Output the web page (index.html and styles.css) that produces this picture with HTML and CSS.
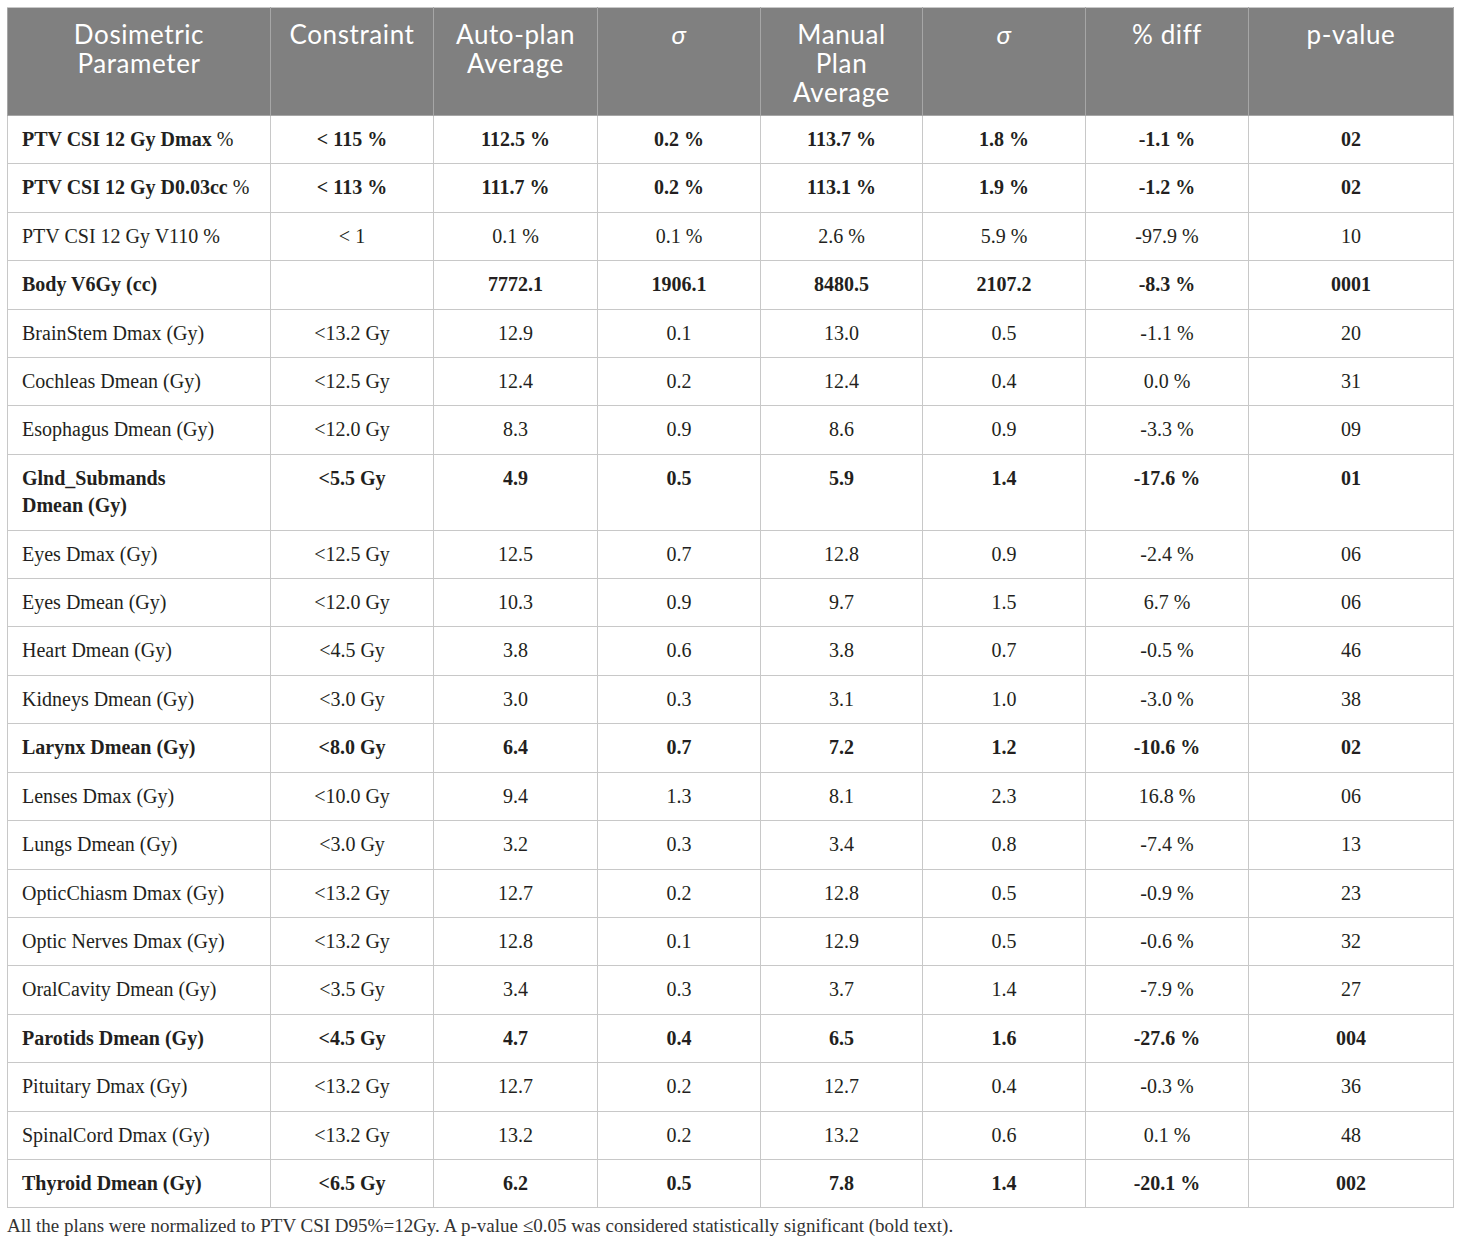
FILE: index.html
```html
<!DOCTYPE html>
<html lang="en">
<head>
  <meta charset="UTF-8">
  <title>Dosimetric comparison</title>
  <link rel="stylesheet" href="styles.css">
</head>
<body>
  <div class="wrap">
    <table class="dose">
      <colgroup>
        <col style="width: 263px">
        <col style="width: 163px">
        <col style="width: 164px">
        <col style="width: 163px">
        <col style="width: 162px">
        <col style="width: 163px">
        <col style="width: 163px">
        <col style="width: 205px">
      </colgroup>
      <thead>
        <tr>
          <th>Dosimetric<br>Parameter</th>
          <th>Constraint</th>
          <th>Auto-plan<br>Average</th>
          <th class="sig">σ</th>
          <th>Manual<br>Plan<br>Average</th>
          <th class="sig">σ</th>
          <th>% diff</th>
          <th>p-value</th>
        </tr>
      </thead>
      <tbody>
        <tr class="bold"><td>PTV CSI 12 Gy Dmax <span class="reg">%</span></td><td>&lt; 115 %</td><td>112.5 %</td><td>0.2 %</td><td>113.7 %</td><td>1.8 %</td><td>-1.1 %</td><td>02</td></tr>
        <tr class="bold"><td>PTV CSI 12 Gy D0.03cc <span class="reg">%</span></td><td>&lt; 113 %</td><td>111.7 %</td><td>0.2 %</td><td>113.1 %</td><td>1.9 %</td><td>-1.2 %</td><td>02</td></tr>
        <tr><td>PTV CSI 12 Gy V110 %</td><td>&lt; 1</td><td>0.1 %</td><td>0.1 %</td><td>2.6 %</td><td>5.9 %</td><td>-97.9 %</td><td>10</td></tr>
        <tr class="bold"><td>Body V6Gy (cc)</td><td></td><td>7772.1</td><td>1906.1</td><td>8480.5</td><td>2107.2</td><td>-8.3 %</td><td>0001</td></tr>
        <tr><td>BrainStem Dmax (Gy)</td><td>&lt;13.2 Gy</td><td>12.9</td><td>0.1</td><td>13.0</td><td>0.5</td><td>-1.1 %</td><td>20</td></tr>
        <tr><td>Cochleas Dmean (Gy)</td><td>&lt;12.5 Gy</td><td>12.4</td><td>0.2</td><td>12.4</td><td>0.4</td><td>0.0 %</td><td>31</td></tr>
        <tr><td>Esophagus Dmean (Gy)</td><td>&lt;12.0 Gy</td><td>8.3</td><td>0.9</td><td>8.6</td><td>0.9</td><td>-3.3 %</td><td>09</td></tr>
        <tr class="bold"><td>Glnd_Submands<br>Dmean (Gy)</td><td>&lt;5.5 Gy</td><td>4.9</td><td>0.5</td><td>5.9</td><td>1.4</td><td>-17.6 %</td><td>01</td></tr>
        <tr><td>Eyes Dmax (Gy)</td><td>&lt;12.5 Gy</td><td>12.5</td><td>0.7</td><td>12.8</td><td>0.9</td><td>-2.4 %</td><td>06</td></tr>
        <tr><td>Eyes Dmean (Gy)</td><td>&lt;12.0 Gy</td><td>10.3</td><td>0.9</td><td>9.7</td><td>1.5</td><td>6.7 %</td><td>06</td></tr>
        <tr><td>Heart Dmean (Gy)</td><td>&lt;4.5 Gy</td><td>3.8</td><td>0.6</td><td>3.8</td><td>0.7</td><td>-0.5 %</td><td>46</td></tr>
        <tr><td>Kidneys Dmean (Gy)</td><td>&lt;3.0 Gy</td><td>3.0</td><td>0.3</td><td>3.1</td><td>1.0</td><td>-3.0 %</td><td>38</td></tr>
        <tr class="bold"><td>Larynx Dmean (Gy)</td><td>&lt;8.0 Gy</td><td>6.4</td><td>0.7</td><td>7.2</td><td>1.2</td><td>-10.6 %</td><td>02</td></tr>
        <tr><td>Lenses Dmax (Gy)</td><td>&lt;10.0 Gy</td><td>9.4</td><td>1.3</td><td>8.1</td><td>2.3</td><td>16.8 %</td><td>06</td></tr>
        <tr><td>Lungs Dmean (Gy)</td><td>&lt;3.0 Gy</td><td>3.2</td><td>0.3</td><td>3.4</td><td>0.8</td><td>-7.4 %</td><td>13</td></tr>
        <tr><td>OpticChiasm Dmax (Gy)</td><td>&lt;13.2 Gy</td><td>12.7</td><td>0.2</td><td>12.8</td><td>0.5</td><td>-0.9 %</td><td>23</td></tr>
        <tr><td>Optic Nerves Dmax (Gy)</td><td>&lt;13.2 Gy</td><td>12.8</td><td>0.1</td><td>12.9</td><td>0.5</td><td>-0.6 %</td><td>32</td></tr>
        <tr><td>OralCavity Dmean (Gy)</td><td>&lt;3.5 Gy</td><td>3.4</td><td>0.3</td><td>3.7</td><td>1.4</td><td>-7.9 %</td><td>27</td></tr>
        <tr class="bold"><td>Parotids Dmean (Gy)</td><td>&lt;4.5 Gy</td><td>4.7</td><td>0.4</td><td>6.5</td><td>1.6</td><td>-27.6 %</td><td>004</td></tr>
        <tr><td>Pituitary Dmax (Gy)</td><td>&lt;13.2 Gy</td><td>12.7</td><td>0.2</td><td>12.7</td><td>0.4</td><td>-0.3 %</td><td>36</td></tr>
        <tr><td>SpinalCord Dmax (Gy)</td><td>&lt;13.2 Gy</td><td>13.2</td><td>0.2</td><td>13.2</td><td>0.6</td><td>0.1 %</td><td>48</td></tr>
        <tr class="bold"><td>Thyroid Dmean (Gy)</td><td>&lt;6.5 Gy</td><td>6.2</td><td>0.5</td><td>7.8</td><td>1.4</td><td>-20.1 %</td><td>002</td></tr>
      </tbody>
    </table>
    <p class="note">All the plans were normalized to PTV CSI D95%=12Gy. A p-value ≤0.05 was considered statistically significant (bold text).</p>
  </div>
</body>
</html>
```

FILE: styles.css
```css
* {
  margin: 0;
  padding: 0;
  box-sizing: border-box;
}

body {
  background: #fff;
  font-family: "Liberation Serif", "Times New Roman", serif;
  color: #231f20;
}

.wrap {
  padding: 7px 7px 0 7px;
}

.dose {
  width: 1446px;
  table-layout: fixed;
  border-collapse: collapse;
}

.dose th {
  background-color: #808080;
  color: #fff;
  font-family: Lato, "Open Sans", sans-serif;
  font-weight: 400;
  font-size: 26px;
  letter-spacing: 0.6px;
  line-height: 29px;
  text-align: center;
  vertical-align: top;
  padding: 12px 8px 8px;
  border: 1px solid #a6a6a6;
  border-top-color: #c8c8c8;
}

.dose th.sig {
  font-style: italic;
}

.dose td {
  font-size: 20px;
  line-height: 27.4px;
  padding: 10px 14px 10px;
  text-align: center;
  vertical-align: top;
  white-space: nowrap;
  border: 1px solid #c8c8c8;
}

.dose td:first-child {
  text-align: left;
}

.dose tr.bold td {
  font-weight: 700;
}

.dose .reg {
  font-weight: 400;
}

.note {
  margin-top: 6px;
  font-size: 19px;
  line-height: 24px;
  color: #333;
}
```
